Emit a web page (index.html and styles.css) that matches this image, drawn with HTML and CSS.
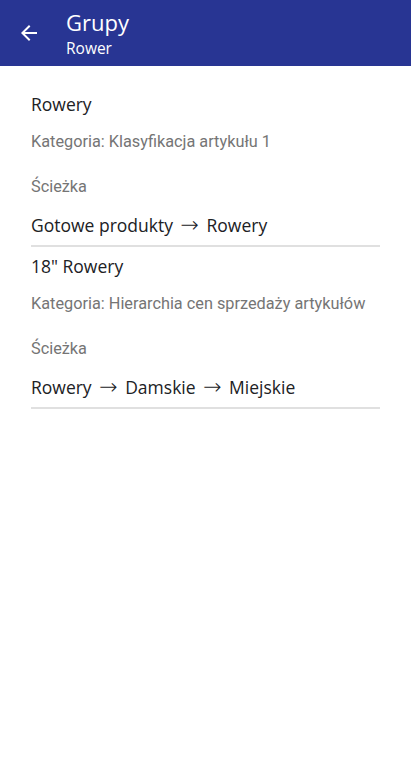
FILE: index.html
```html
<!DOCTYPE html>
<html lang="pl">
<head>
<meta charset="utf-8">
<link rel="stylesheet" href="styles.css">
</head>
<body>
<header class="appbar">
  <button class="back" aria-label="Wstecz">
    <svg width="24" height="24" viewBox="0 0 24 24"><path d="M20 11H7.83l5.59-5.59L12 4l-8 8 8 8 1.41-1.41L7.83 13H20v-2z" fill="#fff"/></svg>
  </button>
  <div class="titles">
    <div class="title">Grupy</div>
    <div class="subtitle">Rower</div>
  </div>
</header>
<main class="list">
  <section class="group">
    <div class="name">Rowery</div>
    <div class="category">Kategoria: Klasyfikacja artykułu 1</div>
    <div class="label">Ścieżka</div>
    <div class="path">Gotowe produkty <span class="arrow">→</span> Rowery</div>
  </section>
  <section class="group">
    <div class="name">18" Rowery</div>
    <div class="category">Kategoria: Hierarchia cen sprzedaży artykułów</div>
    <div class="label">Ścieżka</div>
    <div class="path">Rowery <span class="arrow">→</span> Damskie <span class="arrow">→</span> Miejskie</div>
  </section>
</main>
</body>
</html>
```
FILE: styles.css
```css
* { box-sizing: border-box; }
body {
  margin: 0;
  background: #fff;
  font-family: Roboto, "Noto Sans", sans-serif;
}
.appbar {
  height: 66px;
  background: #283593;
  display: flex;
  align-items: center;
  color: #fff;
}
.back {
  background: none;
  border: 0;
  padding: 0;
  margin-left: 17px;
  width: 24px;
  height: 24px;
  display: flex;
}
.titles {
  margin-left: 25px;
  display: flex;
  flex-direction: column;
  margin-top: 4px;
}
.title {
  font-family: "Open Sans", Roboto, sans-serif;
  font-size: 22px;
  line-height: 26px;
  font-weight: 500;
}
.subtitle {
  font-family: "Open Sans", Roboto, sans-serif;
  font-size: 15.5px;
  line-height: 26px;
}
.list {
  padding: 0 31px;
}
.group {
  display: flex;
  flex-direction: column;
}
.group:first-child { padding-top: 25px; }
.name {
  font-family: "Open Sans", Roboto, sans-serif;
  font-size: 17.5px;
  line-height: 26px;
  color: #202124;
  height: 26px;
}
.category {
  margin-top: 14px;
  font-size: 16.3px;
  line-height: 22px;
  color: #757575;
}
.label {
  margin-top: 23px;
  font-size: 16.3px;
  line-height: 22px;
  color: #757575;
}
.path {
  margin-top: 14px;
  font-family: "Open Sans", Roboto, sans-serif;
  font-size: 17.5px;
  line-height: 26px;
  color: #202124;
  padding-bottom: 7px;
  border-bottom: 2px solid #e0e0e0;
  margin-bottom: 6px;
}
.arrow {
  font-family: "DejaVu Sans", sans-serif;
  font-size: 22px;
  line-height: 20px;
  font-weight: 300;
  margin: 0 3px;
}
```
